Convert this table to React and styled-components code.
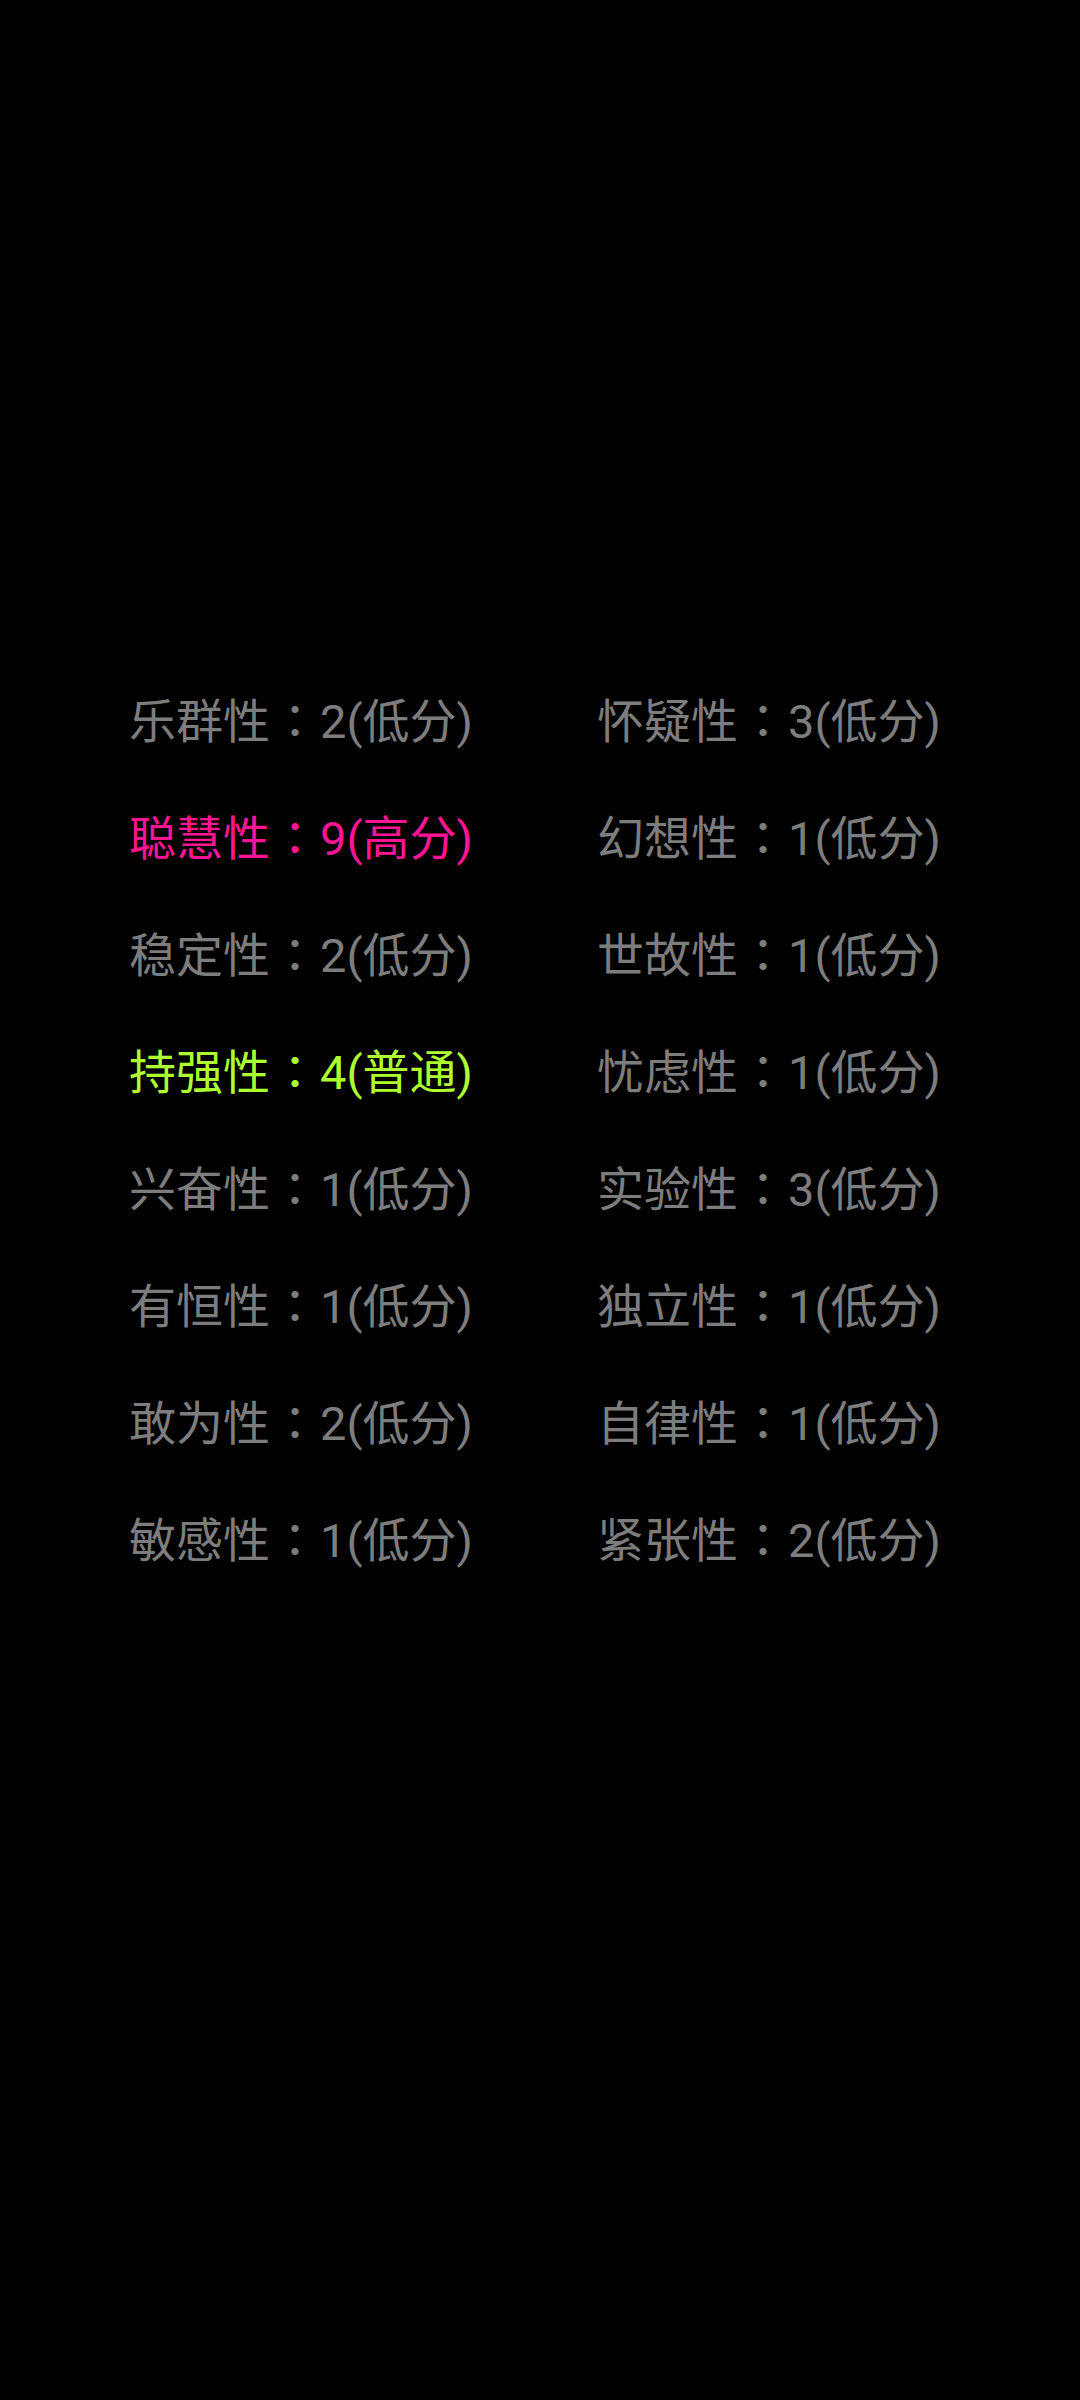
import React from 'react';
import styled, { createGlobalStyle } from 'styled-components';

const GlobalStyle = createGlobalStyle`
  html, body {
    margin: 0;
    padding: 0;
    background: #000000;
  }
  #root {
    min-height: 2400px;
    background: #000000;
  }
`;

const traits = [
  ['乐群性', 2, '低分'], ['怀疑性', 3, '低分'],
  ['聪慧性', 9, '高分'], ['幻想性', 1, '低分'],
  ['稳定性', 2, '低分'], ['世故性', 1, '低分'],
  ['持强性', 4, '普通'], ['忧虑性', 1, '低分'],
  ['兴奋性', 1, '低分'], ['实验性', 3, '低分'],
  ['有恒性', 1, '低分'], ['独立性', 1, '低分'],
  ['敢为性', 2, '低分'], ['自律性', 1, '低分'],
  ['敏感性', 1, '低分'], ['紧张性', 2, '低分'],
];

const levelColor = {
  低分: '#7d7d7d',
  高分: '#ff1493',
  普通: '#adff2f',
};

const Screen = styled.div`
  width: 1080px;
  height: 2400px;
  background: #000000;
  padding-top: 659px;
  box-sizing: border-box;
`;

const Grid = styled.div`
  display: grid;
  grid-template-columns: 468px 468px;
  padding-left: 129px;
`;

const Trait = styled.div`
  height: 117px;
  line-height: 117px;
  font-family: Roboto, "Noto Sans CJK SC", sans-serif;
  font-size: 47px;
  color: ${p => p.$color};
  white-space: nowrap;
`;

// centred full-width colon, as on the phone
const Colon = styled.span`
  font-family: "Noto Sans CJK TC", sans-serif;
  display: inline-block;
  width: 50px;
  text-align: center;
`;

const App = () => {
  return (
    <Screen>
      <GlobalStyle />
      <Grid>
        {traits.map(([name, score, level]) => (
          <Trait key={name} $color={levelColor[level]}>
            {name}<Colon>：</Colon>{score}({level})
          </Trait>
        ))}
      </Grid>
    </Screen>
  );
};

export default App;
